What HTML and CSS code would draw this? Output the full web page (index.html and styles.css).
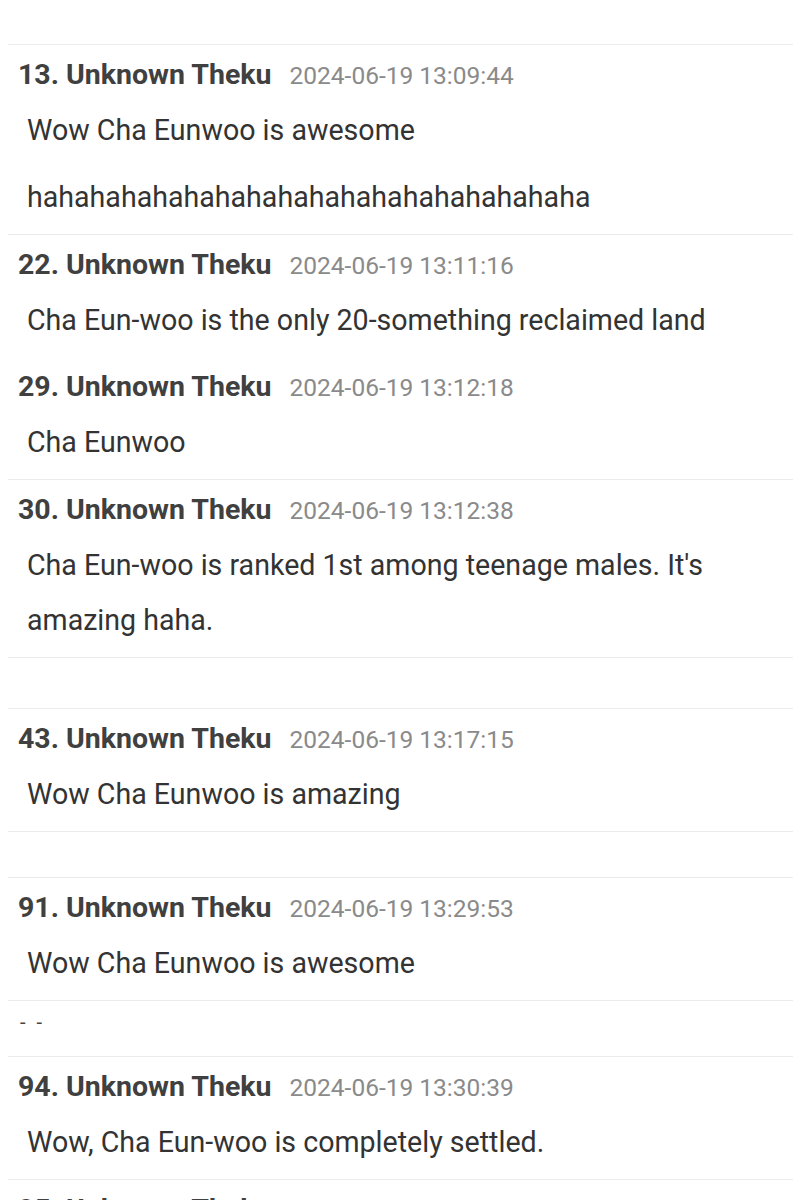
FILE: index.html
```html
<!DOCTYPE html>
<html lang="en">
<head>
  <meta charset="UTF-8" />
  <meta name="viewport" content="width=device-width, initial-scale=1.0"/>
  <title>Comments</title>
  <link rel="stylesheet" href="styles.css">
</head>
<body>

  <main class="comments">
    <div class="top-gap"></div>

    <div class="comment">
      <div class="comment-head"><span class="author">13. Unknown Theku</span><span class="date">2024-06-19 13:09:44</span></div>
      <p class="text">Wow Cha Eunwoo is awesome</p>
      <p class="text more">hahahahahahahahahahahahahahahahahaha</p>
    </div>

    <div class="comment">
      <div class="comment-head"><span class="author">22. Unknown Theku</span><span class="date">2024-06-19 13:11:16</span></div>
      <p class="text">Cha Eun-woo is the only 20-something reclaimed land</p>
    </div>

    <div class="comment joined">
      <div class="comment-head"><span class="author">29. Unknown Theku</span><span class="date">2024-06-19 13:12:18</span></div>
      <p class="text">Cha Eunwoo</p>
    </div>

    <div class="comment">
      <div class="comment-head"><span class="author">30. Unknown Theku</span><span class="date">2024-06-19 13:12:38</span></div>
      <p class="text">Cha Eun-woo is ranked 1st among teenage males. It's amazing haha.</p>
    </div>

    <div class="comment empty tall"></div>

    <div class="comment">
      <div class="comment-head"><span class="author">43. Unknown Theku</span><span class="date">2024-06-19 13:17:15</span></div>
      <p class="text">Wow Cha Eunwoo is amazing</p>
    </div>

    <div class="comment empty"></div>

    <div class="comment">
      <div class="comment-head"><span class="author">91. Unknown Theku</span><span class="date">2024-06-19 13:29:53</span></div>
      <p class="text">Wow Cha Eunwoo is awesome</p>
    </div>

    <div class="comment empty cut"><span class="dashes">- -</span></div>

    <div class="comment">
      <div class="comment-head"><span class="author">94. Unknown Theku</span><span class="date">2024-06-19 13:30:39</span></div>
      <p class="text">Wow, Cha Eun-woo is completely settled.</p>
    </div>

    <div class="comment">
      <div class="comment-head"><span class="author">95. Unknown Theku</span><span class="date">2024-06-19 13:31:02</span></div>
    </div>
  </main>

</body>
</html>
```

FILE: styles.css
```css
body {
  font-family: Roboto, 'Liberation Sans', sans-serif;
  margin: 0;
  padding: 0;
  background: #fff;
  color: #333;
}

.comments {
  padding: 0 8px;
}

.top-gap {
  height: 44px;
}

.comment {
  border-top: 1px solid #ececec;
  padding-bottom: 9px;
}

.comment.joined {
  border-top: none;
}

.comment-head {
  height: 40px;
  margin-top: 10px;
  padding-left: 10px;
  font-size: 28.5px;
  line-height: 40px;
  white-space: nowrap;
  overflow: hidden;
}

.author {
  font-weight: bold;
  color: #404040;
  margin-right: 18px;
}

.date {
  font-size: 24.5px;
  line-height: 1;
  color: #8a8a8a;
}

.text {
  margin: 8px 0 0;
  padding-left: 19px;
  padding-right: 20px;
  font-size: 28.6px;
  line-height: 55px;
  color: #333;
}

.text.more {
  margin-top: 12px;
}

.empty {
  height: 36px;
}

.empty.tall {
  height: 41px;
}

.empty.cut {
  height: 46px;
}

.dashes {
  display: block;
  padding: 11px 0 0 12px;
  font-size: 20px;
  line-height: 20px;
  color: #444;
  letter-spacing: 3px;
}
```
